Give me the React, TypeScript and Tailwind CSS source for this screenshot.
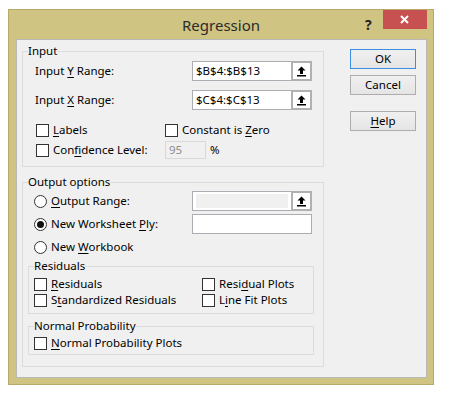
import type { ReactNode } from 'react';

const font = "font-['Segoe_UI','Noto_Sans',sans-serif]";

function U({ children }: { children: ReactNode }) {
  return <span className="underline underline-offset-[1.5px]">{children}</span>;
}

function Check({ children }: { children: ReactNode }) {
  return (
    <div className="flex items-center gap-1">
      <div className="w-[13px] h-[13px] border border-[#333] bg-white"></div>
      <span>{children}</span>
    </div>
  );
}

function Radio({ checked, children }: { checked?: boolean; children: ReactNode }) {
  return (
    <div className="flex items-center gap-1">
      <div className="w-[13px] h-[13px] rounded-full border border-[#333] bg-white flex items-center justify-center">
        {checked && <div className="w-[7px] h-[7px] rounded-full bg-[#111]"></div>}
      </div>
      <span>{children}</span>
    </div>
  );
}

function PickIcon() {
  return (
    <svg width="9" height="11" viewBox="0 0 9 11">
      <path d="M4.5 0.5 L8.5 4.5 H6 V8 H3 V4.5 H0.5 Z" fill="#000" />
      <rect x="0" y="9" width="9" height="1.5" fill="#000" />
    </svg>
  );
}

function RangeField({ value, disabled }: { value?: string; disabled?: boolean }) {
  return (
    <div className="w-[120px] h-[20px] border border-[#abadb3] bg-white flex">
      <div className="flex-1 flex items-center px-[3px]">
        {disabled ? (
          <div className="w-full h-[14px] bg-[#f0f0f0]"></div>
        ) : (
          <span>{value}</span>
        )}
      </div>
      <div className="w-[21px] -my-px -mr-px border-2 border-[#b1b1b1] bg-white flex items-center justify-center">
        <PickIcon />
      </div>
    </div>
  );
}

function Group({ title, className, children }: { title: string; className?: string; children: ReactNode }) {
  return (
    <fieldset className={`border border-[#dcdcdc] pl-[5px] ${className ?? ''}`}>
      <legend className="leading-4">{title}</legend>
      {children}
    </fieldset>
  );
}

export default function App() {
  return (
    <div className={`w-[450px] h-[395px] bg-white pt-[9px] pl-2 text-[11.5px] text-black ${font}`}>
      <div className="w-[426px] h-[376px] bg-[#d0c483] border border-[#b5aa6c] flex flex-col">
        <div className="h-[29px] flex">
          <div className="w-[68px]"></div>
          <div className="flex-1 flex items-center justify-center text-[15px] text-[#2b2b2b] pt-[2px]">
            Regression
          </div>
          <div className="w-[68px] flex items-start justify-end pr-[6px]">
            <span className="text-[14px] font-bold text-[#222] mt-[4px] mr-[11px]">?</span>
            <div className="w-[45px] h-[19px] bg-[#c75050] flex items-center justify-center">
              <svg width="9" height="9" viewBox="0 0 9 9">
                <path d="M1 1 L8 8 M8 1 L1 8" stroke="#fff" strokeWidth="2" />
              </svg>
            </div>
          </div>
        </div>

        <div className="mx-[7px] w-[411px] h-[339px] bg-[#f0f0f0] border border-[#b9b9b9] flex pl-[5px]">
          <div className="w-[302px]">
            <Group title="Input" className="mt-[3px] pb-[6px]">
              <div className="pl-[7px]">
                <div className="mt-[2px] h-5 flex items-center">
                  <span className="w-[157px]">
                    Input <U>Y</U> Range:
                  </span>
                  <RangeField value="$B$4:$B$13" />
                </div>
                <div className="mt-[9px] h-5 flex items-center">
                  <span className="w-[157px]">
                    Input <U>X</U> Range:
                  </span>
                  <RangeField value="$C$4:$C$13" />
                </div>
                <div className="mt-[10px] h-5 flex items-center pl-px">
                  <div className="w-[129px]">
                    <Check>
                      <U>L</U>abels
                    </Check>
                  </div>
                  <Check>
                    Constant is <U>Z</U>ero
                  </Check>
                </div>
                <div className="h-5 flex items-center pl-px">
                  <div className="w-[129px]">
                    <Check>
                      Con<U>f</U>idence Level:
                    </Check>
                  </div>
                  <div className="w-[41px] h-[18px] border border-[#d9d9d9] bg-[#f0f0f0] flex items-center pl-[3px] text-[#8d8d8d]">
                    95
                  </div>
                  <span className="ml-1">%</span>
                </div>
              </div>
            </Group>

            <Group title="Output options" className="mt-[7px] pb-[11px] pr-[9px]">
              <div className="pl-[6px]">
                <div className="mt-px h-5 flex items-center">
                  <div className="w-[158px]">
                    <Radio>
                      <U>O</U>utput Range:
                    </Radio>
                  </div>
                  <RangeField disabled />
                </div>
                <div className="mt-[3px] h-5 flex items-center">
                  <div className="w-[158px]">
                    <Radio checked>
                      New Worksheet <U>P</U>ly:
                    </Radio>
                  </div>
                  <div className="w-[120px] h-[20px] border border-[#abadb3] bg-white"></div>
                </div>
                <div className="mt-[3px] h-5 flex items-center">
                  <Radio>
                    New <U>W</U>orkbook
                  </Radio>
                </div>
              </div>

              <Group title="Residuals" className="mt-px pb-[5px]">
                <div className="mt-[2px] h-4 flex items-center">
                  <div className="w-[168px]">
                    <Check>
                      <U>R</U>esiduals
                    </Check>
                  </div>
                  <Check>
                    Resi<U>d</U>ual Plots
                  </Check>
                </div>
                <div className="h-4 flex items-center">
                  <div className="w-[168px]">
                    <Check>
                      S<U>t</U>andardized Residuals
                    </Check>
                  </div>
                  <Check>
                    L<U>i</U>ne Fit Plots
                  </Check>
                </div>
              </Group>

              <Group title="Normal Probability" className="mt-1 pb-[3px]">
                <div className="mt-px h-4 flex items-center">
                  <Check>
                    <U>N</U>ormal Probability Plots
                  </Check>
                </div>
              </Group>
            </Group>
          </div>

          <div className="ml-[26px] pt-[9px] flex flex-col">
            <div className="w-[66px] h-5 border border-[#3c8fe0] bg-gradient-to-b from-[#f0f0f0] to-[#e5e5e5] flex items-center justify-center">
              OK
            </div>
            <div className="mt-[6px] w-[66px] h-5 border border-[#adadad] bg-gradient-to-b from-[#f0f0f0] to-[#e5e5e5] flex items-center justify-center">
              Cancel
            </div>
            <div className="mt-4 w-[66px] h-5 border border-[#adadad] bg-gradient-to-b from-[#f0f0f0] to-[#e5e5e5] flex items-center justify-center">
              <span>
                <U>H</U>elp
              </span>
            </div>
          </div>
        </div>
      </div>
    </div>
  );
}
